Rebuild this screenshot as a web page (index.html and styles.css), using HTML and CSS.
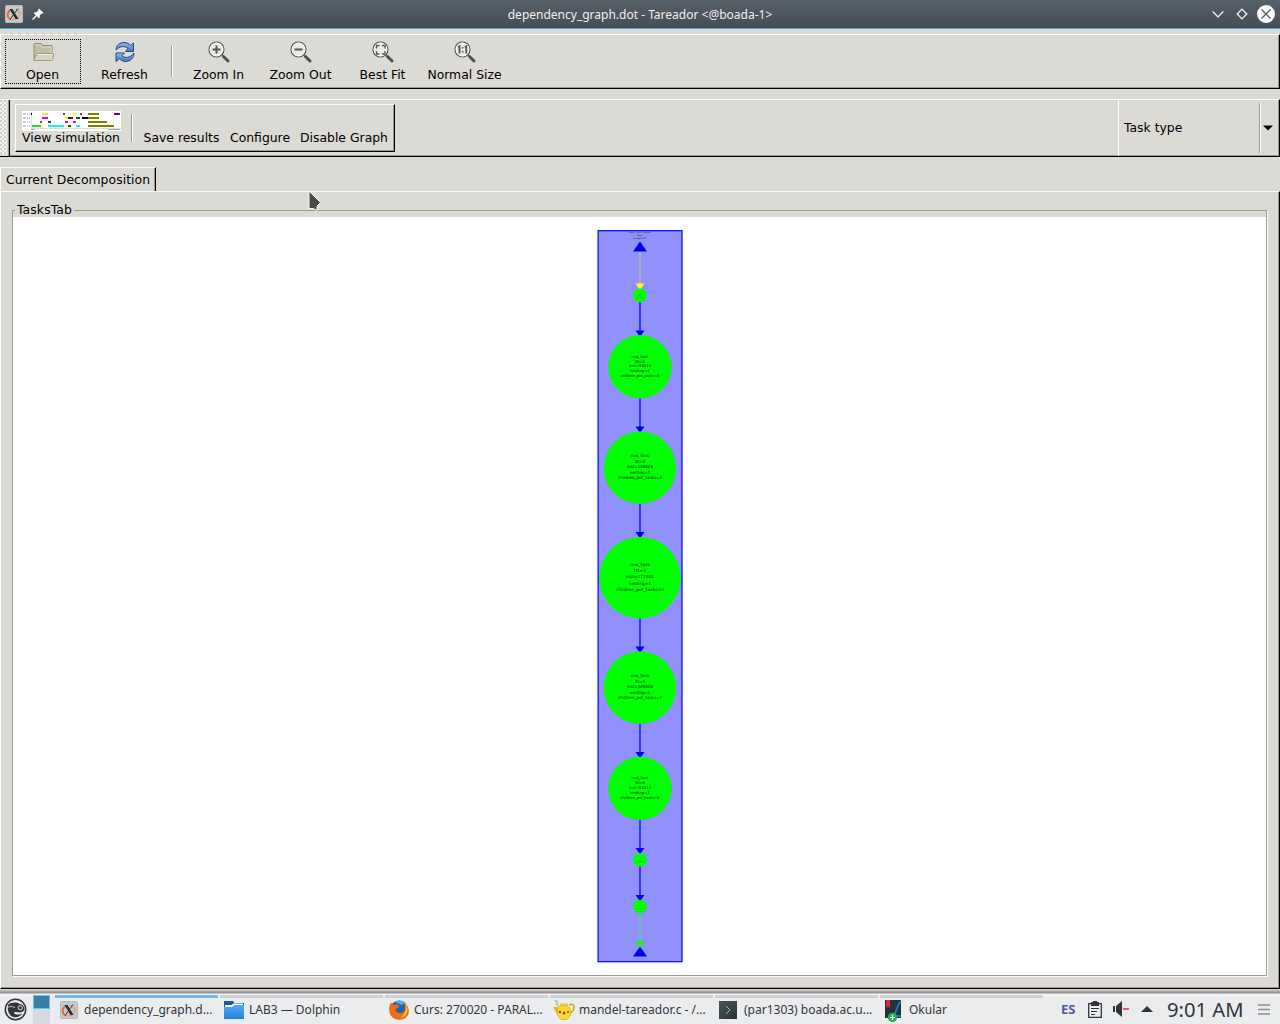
FILE: index.html
```html
<!DOCTYPE html>
<html lang="en">
<head>
<meta charset="utf-8">
<title>dependency_graph.dot - Tareador</title>
<link rel="stylesheet" href="styles.css">
</head>
<body>
<svg class="defs" width="0" height="0">
  <defs>
    <linearGradient id="blue" x1="0" y1="0" x2="0" y2="1"><stop offset="0" stop-color="#8fb8e8"/><stop offset="1" stop-color="#3f78bf"/></linearGradient>
    <linearGradient id="folder" x1="0" y1="0" x2="0" y2="1"><stop offset="0" stop-color="#55aaf5"/><stop offset="1" stop-color="#2380e0"/></linearGradient>
    <linearGradient id="dark" x1="0" y1="0" x2="1" y2="1"><stop offset="0" stop-color="#4a5558"/><stop offset="1" stop-color="#2b3234"/></linearGradient>
    <symbol id="xorg" viewBox="0 0 18 18">
      <rect x=".5" y=".5" width="17" height="17" rx="1" fill="#c3c9cc" stroke="#b3babd"/>
      <path d="M5 5.200C1.500 8 2 13.500 6 14.500" fill="none" stroke="#f0622d" stroke-width="1.800"/>
      <path d="M6 14.500C11 16 16 12 14.500 7.500C14 5.500 12 4.500 10.500 4.500" fill="none" stroke="#e9a060" stroke-width="1.400"/>
      <path d="M4.500 4h3l6 10h-3z" fill="#22282b"/>
      <path d="M13 3.500L5 14.500" stroke="#30363a" stroke-width="1"/>
    </symbol>
    <symbol id="lens" viewBox="0 0 22 22">
      <path d="M13.500 13.500l2.500 2.500" stroke="#777b76" stroke-width="1.500"/>
      <path d="M15.500 15.500l4.500 4.500" stroke="#4e524e" stroke-width="3" stroke-linecap="round"/>
      <circle cx="8.500" cy="8.500" r="7.500" fill="#e9ebe7" stroke="#555753" stroke-width="1.200"/>
      <circle cx="8.500" cy="8.500" r="6.400" fill="none" stroke="#fff" stroke-width=".8"/>
    </symbol>
  </defs>
</svg>

<header class="titlebar">
  <svg class="app-icon" width="18" height="18"><use href="#xorg"/></svg>
  <svg class="pin" width="12" height="12" viewBox="0 0 12 12"><path d="M7 .5l4.500 4.500-1 .8-.8-.2-2 2 .1 1.800-1 .8-2-2L1 12 0 11l3.800-3.800-2-2 .8-1 1.800.1 2-2-.2-.8z" fill="#fcfcfc"/></svg>
  <h1 class="window-title">dependency_graph.dot - Tareador &lt;@boada-1&gt;</h1>
  <svg class="window-buttons" width="66" height="20" viewBox="0 0 66 20" fill="none" stroke="#fcfcfc" stroke-width="1.200">
    <path d="M.7 7.500l5.300 5.300 5.300-5.300M30 5.200l4.800 4.800-4.800 4.800-4.800-4.800z"/>
    <circle cx="54" cy="10" r="9" fill="#fcfcfc" stroke="none"/>
    <path d="M49.500 5.500l9 9M58.500 5.500l-9 9" stroke="#4d565e"/>
  </svg>
</header>

<nav class="toolbar main-tools">
  <button class="tool focused">
    <svg width="22" height="22" viewBox="0 0 22 22"><path d="M2 19V3.500q0-1 1-1h6q1 0 1.200 2H19q1 0 1 1V12" fill="#bebf9f" stroke="#8b8d70"/><path d="M3 4h6v2h10v6" fill="none" stroke="#e0e1ce"/><path d="M1.500 19.500L5 13q.3-.5 1-.5h15q.9 0 .7.800l-1 5.400q-.2.800-1 .8z" fill="#d5d6bd" stroke="#9a9b80"/><path d="M6 13.500h14.500" stroke="#f0f0e6"/></svg>
    <span>Open</span>
  </button>
  <button class="tool">
    <svg width="22" height="22" viewBox="0 0 22 22"><g fill="url(#blue)" stroke="#234b82"><path d="M2 9C2 4 6 1.500 10 1.500c3 0 5 1.200 6.500 2.800L19.500 2v8.500h-8L14 7.500C10.500 4.500 6 5 2 9z"/><path d="M20 12c0 5-4 8.500-8 8.500-3 0-5-1.200-6.500-2.800L2 20.500V12h8.500L8 14.800c3.500 2.700 8 2.200 12-2.800z"/></g></svg>
    <span>Refresh</span>
  </button>
  <i class="separator"></i>
  <button class="tool">
    <svg width="22" height="22"><use href="#lens"/><path d="M8.500 4.500v8M4.500 8.500h8" stroke="#555753" stroke-width="2"/></svg>
    <span>Zoom In</span>
  </button>
  <button class="tool">
    <svg width="22" height="22"><use href="#lens"/><path d="M4.500 8.500h8" stroke="#555753" stroke-width="2"/></svg>
    <span>Zoom Out</span>
  </button>
  <button class="tool">
    <svg width="22" height="22"><use href="#lens"/><path d="M4.500 7.500v-3h3M10 4.500h3v3M13 10v3h-3M7.500 13h-3v-3" fill="none" stroke="#555753" stroke-width="1.300"/></svg>
    <span>Best Fit</span>
  </button>
  <button class="tool">
    <svg width="22" height="22"><use href="#lens"/><path d="M4 6.200l1.500-1V12.500M10.800 6.200l1.500-1V12.500" fill="none" stroke="#555753" stroke-width="1.900"/><path d="M8 6h1.500v1.500H8zM8 10h1.500v1.500H8z" fill="#555753"/></svg>
    <span>Normal Size</span>
  </button>
</nav>

<section class="toolbar sub-tools">
  <i class="grip"></i>
  <div class="sim-panel">
    <button class="sim">
      <svg width="99" height="20" viewBox="0 0 99 20">
        <path d="M0 0h99v20H0z" fill="#fff"/>
        <path d="M1 3h7M1 7h7M1 11h7M1 15h7" stroke="#999" stroke-dasharray="3 1 1 1"/>
        <path d="M9.500 1v16.500H99" fill="none" stroke="#ddd"/>
        <path d="M9 18.500h4M86 18.500h12" stroke="#aaa"/>
        <path d="M9 2h1v2H9z" fill="#007"/>
        <path d="M20 2h6v2h-6zM51 2h3v2h-3zM43 6h3v2h-3z" fill="#ee2"/>
        <path d="M20 6h6v2h-6zM43 10h3v2h-3zM51 10h3v2h-3z" fill="#d0d"/>
        <path d="M41 2h2v2h-2zM58 2h2v2h-2zM18 10h2v2h-2z" fill="#c22"/>
        <path d="M46 6h5v2h-5z" fill="#800"/><path d="M54 6h4v2h-4zM26 10h3v2h-3zM46 14h3v2h-3z" fill="#060"/>
        <path d="M60 6h6v2h-6z" fill="#005"/><path d="M10 14h9v2h-9z" fill="#2d2"/>
        <path d="M26 14h16v2H26zM54 14h4v2h-4z" fill="#2ee"/>
        <path d="M66 2h11v2H66zM66 6h11v2H66zM66 10h19v2H66zM66 14h26v2H66z" fill="#808000"/>
        <path d="M92 2h6v2h-6z" fill="#707"/>
      </svg>
      <span>View simulation</span>
    </button>
    <i class="separator small"></i>
    <button class="plain save">Save results</button>
    <button class="plain configure">Configure</button>
    <button class="plain disable">Disable Graph</button>
  </div>
  <div class="task-type">
    <span>Task type</span>
    <i class="separator tall"></i>
    <svg width="10" height="6" viewBox="0 0 10 6"><path d="M0 .5h10L5 5.500z"/></svg>
  </div>
</section>

<main class="notebook">
  <div class="tabs"><span class="tab">Current Decomposition</span></div>
  <div class="page">
    <fieldset class="frame">
      <legend>TasksTab</legend>
      <div class="canvas">
        <svg width="86" height="733" viewBox="597 230 86 733">
          <rect x="598.100" y="230.700" width="83.900" height="731" fill="#9090ff" stroke="#1010ec" stroke-width="1.300"/>
          <g stroke="#2020ff" stroke-width="1.600">
            <path d="M640 252v32" stroke="#b8b8a0"/>
            <path d="M640 302v29M640 398v29M640 503v30M640 618v29M640 723v30M640 820v29M640 866v30"/>
            <path d="M640 914v28" stroke="#40ef60" stroke-dasharray="1.500 1"/>
          </g>
          <g fill="#0000f5">
            <path d="M640 241.500l7 10h-14zM640 946.500l7 10h-14z" fill="#0000e6"/>
            <path d="M635.500 330.500h9l-4.500 6.500zM635.500 426.500h9l-4.500 6.500zM635.500 532h9l-4.500 6.500zM635.500 646.500h9l-4.500 6.500zM635.500 752h9l-4.500 6.500zM635.500 848h9l-4.500 6.500zM635.500 895h9l-4.500 6.500z"/>
            <path d="M635.500 283.500h9l-4.500 6.500z" fill="#ff0"/>
            <path d="M635.500 941.500h9l-4.500 6.500z" fill="#0f0"/>
          </g>
          <g fill="#0f0">
            <circle cx="640" cy="295.300" r="6.900"/><circle cx="640" cy="366.800" r="31.700"/>
            <circle cx="640" cy="467.800" r="36.200"/><circle cx="640" cy="577.700" r="40.700"/>
            <circle cx="640" cy="687.700" r="36.200"/><circle cx="640" cy="788.500" r="31.700"/>
            <circle cx="640" cy="859.800" r="6.900"/><circle cx="640" cy="906.600" r="6.900"/>
          </g>
          <g class="node-text">
            <g font-size="2"><text x="640" y="233" textLength="22">main_task_region</text><text x="640" y="236">ID=0</text><text x="640" y="239">inst=490307</text></g>
            <g font-size="1.500" opacity=".7"><text x="640" y="294">row</text><text x="640" y="296">ID=1</text><text x="640" y="298">inst=4021</text><text x="640" y="859">row</text><text x="640" y="860.500">ID=7</text><text x="640" y="862">inst=4021</text><text x="640" y="905.500">row</text><text x="640" y="907">ID=8</text><text x="640" y="908.500">inst=4021</text></g>
            <g font-size="3.800"><text x="640" y="358">row_task</text><text x="640" y="363">ID=2</text><text x="640" y="367.200">inst=55314</text><text x="640" y="372">nesting=1</text><text x="640" y="377" textLength="39">children_pot_tasks=0</text></g>
            <g font-size="4"><text x="640" y="457" textLength="18">row_task</text><text x="640" y="463">ID=3</text><text x="640" y="468.200">inst=109426</text><text x="640" y="474">nesting=1</text><text x="640" y="479" textLength="44">children_pot_tasks=0</text></g>
            <g font-size="4.200"><text x="640" y="566" textLength="20">row_task</text><text x="640" y="572" textLength="12">ID=4</text><text x="640" y="578" textLength="28">inst=217002</text><text x="640" y="585" textLength="22">nesting=1</text><text x="640" y="591" textLength="48">children_pot_tasks=0</text></g>
            <g font-size="4"><text x="640" y="677" textLength="18">row_task</text><text x="640" y="683">ID=5</text><text x="640" y="688.200">inst=109426</text><text x="640" y="694">nesting=1</text><text x="640" y="699" textLength="44">children_pot_tasks=0</text></g>
            <g font-size="3.800"><text x="640" y="779">row_task</text><text x="640" y="784">ID=6</text><text x="640" y="789">inst=55314</text><text x="640" y="794">nesting=1</text><text x="640" y="799" textLength="39">children_pot_tasks=0</text></g>
          </g>
        </svg>
      </div>
    </fieldset>
  </div>
</main>

<footer class="taskbar">
  <svg class="launcher" width="23" height="23" viewBox="0 0 23 23"><circle cx="11.500" cy="11.500" r="10.200" fill="none" stroke="#31363b" stroke-width="1.500"/><path d="M4 7C7 4 12 4 16 6c3 .2 4.500 2.500 4.500 5.500-1 3-4.500 3.500-8.500 2.500-2-.4-3 1-1 2 3 1 5.500.7 7.500-.8-2 3.300-5.500 4.500-9 3.800C5 18 3 12 4 7z" fill="#31363b"/><circle cx="16.300" cy="9.800" r="2.100" fill="none" stroke="#ecedef" stroke-width=".9"/><path d="M3 9.500q4-2.500 8 0" fill="none" stroke="#ecedef" stroke-width=".7"/></svg>
  <div class="pager"><i class="desk current"></i><i class="desk"></i></div>
  <div class="tasks">
    <div class="task active"><svg width="18" height="18"><use href="#xorg"/></svg><span>dependency_graph.d...</span></div>
    <div class="task"><svg width="20" height="18" viewBox="0 0 20 18"><path d="M0 0h9l1.500 2H20v4H0z" fill="#175a8f"/><path d="M1 4h7l1-1.500h10V8H1z" fill="#fff"/><path d="M0 6h8l2-2h10v14H0z" fill="url(#folder)"/></svg><span>LAB3 — Dolphin</span></div>
    <div class="task"><svg width="20" height="20" viewBox="0 0 20 20"><circle cx="10" cy="9.500" r="9" fill="#2763ad"/><path d="M6 2C9-.3 15 0 17.500 4c-2-1-4-.5-5 1z" fill="#5cb0e8"/><path d="M2 2.500L4.500 5c3-1 5-.5 6 1.500C9.500 8 7 8 6.500 10c1 4 7 4 9 1 1.500-3 1-5-.5-8C23 8 21 19.500 10.500 19.800 2 20-1.500 12 .8 5z" fill="#f06b16"/><path d="M16 3c5 6 2 14-5 15 5-3 7-8 5-15z" fill="#ffc52a"/></svg><span>Curs: 270020 - PARAL...</span></div>
    <div class="task teapot"><svg width="22" height="20" viewBox="0 0 22 20"><path d="M1.500 0q3 .5 3 6" fill="none" stroke="#c4c4c4" stroke-width="2.500"/><path d="M16 5q5.500-2 5 2.500t-5 6" fill="none" stroke="#d0ad13" stroke-width="1.600"/><path d="M0 7h4l2 3-1 6z" fill="#ddbc1d"/><path d="M5 7q5-3 11 0 2.500 4 1.500 8.500L14 19.500H8l-3.500-4z" fill="#f4dd35" stroke="#d1ad14" stroke-width=".7"/><path d="M7 3.500h8v3.500H7z" fill="#e5ca2c"/><g fill="#c53424"><circle cx="7" cy="12" r="1.200"/><circle cx="11" cy="13" r="1.500"/><circle cx="15" cy="12" r="1"/></g></svg><span>mandel-tareador.c - /...</span></div>
    <div class="task"><svg width="18" height="18" viewBox="0 0 18 18"><path d="M0 0h18v18H0z" fill="url(#dark)"/><path d="M7 5l4 4-4 4" fill="none" stroke="#aab3b5"/></svg><span class="wide-gap">(par1303) boada.ac.u...</span></div>
    <div class="task"><svg class="okular" width="18" height="23" viewBox="0 0 18 23"><path d="M1 0h16v18H1z" fill="#293037"/><path d="M17 1C13 5 13 10 10 16h7" fill="none" stroke="#1688dc" stroke-width="1.500"/><path d="M2 0h4v8L4 6 2 8z" fill="#d92846"/><circle cx="8.500" cy="17.500" r="4.700" fill="#20b35a"/><path d="M8.500 15v5M6 17.500h5" stroke="#fff" stroke-width="1.200"/></svg><span class="wide-gap">Okular</span></div>
  </div>
  <div class="tray">
    <span class="lang">ES</span>
    <svg width="14" height="17" viewBox="0 0 14 17"><path d="M.7 2.700h12.600v13.600H.7z" fill="none" stroke="#31363b" stroke-width="1.300"/><path d="M3 1h2V0h4v1h2v4H3z" fill="#31363b"/><path d="M3 7.500h8M3 10.500h6M3 13.500h4" stroke="#31363b"/></svg>
    <svg width="16" height="16" viewBox="0 0 16 16"><path d="M0 5h2v6H0zM3 5l6-5v16l-6-5z" fill="#31363b"/><path d="M10 8h6" stroke="#da4453" stroke-width="1.700"/></svg>
    <svg width="12" height="6" viewBox="0 0 12 6"><path d="M0 6l6-6 6 6z" fill="#31363b"/></svg>
    <time>9:01 AM</time>
    <svg width="12" height="11" viewBox="0 0 12 11"><path d="M0 1h12M0 5.500h12M0 10h12" stroke="#8d9093" stroke-width="1.500"/></svg>
  </div>
</footer>

<svg class="pointer" width="14" height="22" viewBox="0 0 14 22"><path d="M1 1v17.500h4l4 2v-4.500l3.500-3.500z" fill="#4a4a4a" stroke="#f8f8f8"/></svg>
</body>
</html>
```
FILE: styles.css
```css
* { box-sizing: border-box; }
body {
  margin: 0;
  width: 1280px;
  height: 1024px;
  overflow: hidden;
  display: flex;
  flex-direction: column;
  background: #dcdad5;
  color: #000;
  font: 12.4px/16px "DejaVu Sans", sans-serif;
}
.defs { position: absolute; }
svg { display: block; flex: none; }
button {
  border: 0;
  padding: 0;
  background: none;
  color: inherit;
  font: inherit;
  white-space: nowrap;
}

.titlebar {
  flex: none;
  height: 29px;
  display: flex;
  align-items: center;
  padding: 0 2px 0 5px;
  background: linear-gradient(#566069, #454d55);
  border-bottom: 1px solid #3daee9;
}
.pin { margin-left: 9px; }
.window-title {
  flex: 1;
  margin: 0;
  padding: 2px 0 0 24px;
  text-align: center;
  color: #eff0f1;
  font: 12px/20px "Noto Sans", sans-serif;
}

.toolbar {
  flex: none;
  display: flex;
  border-top: 1px solid #fff;
  border-right: 1px solid #000;
  border-bottom: 1px solid #000;
  box-shadow: inset -1px -1px #9c9a91;
}
.main-tools {
  margin-top: 5px;
  height: 55px;
  border-left: 1px solid #fff;
}
.tool {
  width: 76px;
  height: 45px;
  margin: 4px 3px 0;
  display: flex;
  flex-direction: column;
  align-items: center;
  padding: 2px 1px 0 0;
}
.tool:first-child { margin-left: 4px; }
.tool span { margin-top: 4px; }
.focused { outline: 1px dotted #000; outline-offset: -1px; }
.separator {
  width: 2px;
  border-left: 1px solid #9c9a91;
  border-right: 1px solid #fff;
}
.main-tools .separator { height: 31px; margin: 11px 5px 0; }

.sub-tools { margin-top: 10px; height: 58px; }
.grip {
  width: 10px;
  border-right: 1px solid #000;
  background: conic-gradient(#f4f3f1 25%, #dcdad5 0 50%, #f4f3f1 0 75%, #d0cec8 0) 0 0 / 4px 4px;
  box-shadow: inset -1px 0 #9c9a91, inset -2px -2px #dcdad5;
}
.sim-panel {
  width: 380px;
  height: 48px;
  margin: 4px 0 0 5px;
  display: flex;
  border: 1px solid;
  border-color: #fff #000 #000 #fff;
  box-shadow: inset -1px -1px #9c9a91;
}
.sim { width: 99px; margin: 6px 0 0 6px; text-align: left; align-self: flex-start; }
.sim span { display: block; line-height: 14px; }
.small { height: 28px; margin: 9px 0 0 10px; }
.plain { align-self: flex-start; margin-top: 25px; }
.save { margin-left: 10px; width: 77px; }
.configure { margin-left: 10px; width: 60px; }
.disable { margin-left: 10px; width: 88px; }
.task-type {
  width: 161px;
  margin-left: auto;
  display: flex;
  align-items: center;
  padding-left: 5px;
  border-left: 1px solid #fff;
}
.tall { height: 50px; margin: 0 2px 0 auto; }
.task-type svg { margin-right: 6px; }

.notebook { flex: none; height: 822px; margin-top: 10px; display: flex; flex-direction: column; }
.tabs { height: 24px; display: flex; }
.tab {
  width: 156px;
  height: 24px;
  padding: 4px 0 0 5px;
  border: 1px solid #fff;
  border-right-color: #000;
  border-bottom: 0;
  background: #dcdad5;
  box-shadow: inset -1px 0 #9c9a91;
  letter-spacing: .04px;
}
.page {
  flex: 1;
  padding: 10px 12px 11px 11px;
  border: 1px solid;
  border-color: #fff #000 #000 #fff;
  box-shadow: inset -1px -1px #9c9a91;
}
.frame {
  height: 774px;
  margin: 0;
  padding: 0;
  border: 1px solid #9c9a91;
  box-shadow: 1px 1px #fff;
}
legend { margin-left: 2px; padding: 0 2px; height: 16px; letter-spacing: .1px; }
.canvas {
  height: 758px;
  margin-top: -1px;
  display: flex;
  justify-content: center;
  padding: 13px 0 0 1px;
  background: #fff;
}
.node-text { text-anchor: middle; fill: #001000; }

.taskbar {
  flex: none;
  height: 35px;
  padding-top: 6px;
  display: flex;
  color: #31363b;
  background: linear-gradient(#d9d7d4, #918c8c 4px, #f4f4f5 5px, #ebecee 10px);
  font: 12px/18px "Noto Sans", sans-serif;
}
.launcher { margin: 3px 6px 0 4px; }
.pager { width: 17px; margin-right: 5px; }
.desk { display: block; height: 14px; background: #d7d9dc; }
.desk + .desk { height: 15px; }
.current { border: 1px solid #69bfec; background: #397fa5; }
.tasks { display: flex; gap: 2px; }
.task {
  width: 163px;
  display: flex;
  align-items: center;
  gap: 6px;
  padding: 0 0 3px 5px;
  border-top: 3px solid #d0d1d5;
  white-space: nowrap;
}
.active { border-color: #6dbbea; }
.task:nth-child(n+2) svg { margin-left: -1px; }
.task:nth-child(n+2) { gap: 5px; }
.task:nth-child(n+2).teapot { gap: 4px; }
.task.teapot svg { margin-left: -2px; }
.task .wide-gap { margin-left: 2px; }
.task .okular { margin-top: 3px; }
.tray { flex: 1; display: flex; align-items: center; padding-bottom: 1px; }
.lang { margin-left: 18px; width: 27px; font-size: 13px; font-weight: 700; color: #4d5aa0; }
.tray svg:nth-of-type(2) { margin-left: 11px; }
.tray svg:nth-of-type(3) { margin-left: 12px; }
.tray time { width: 76px; margin: 0 15px 0 14px; font-size: 20.200px; white-space: nowrap; }

.pointer { position: absolute; left: 308px; top: 190px; }
```
